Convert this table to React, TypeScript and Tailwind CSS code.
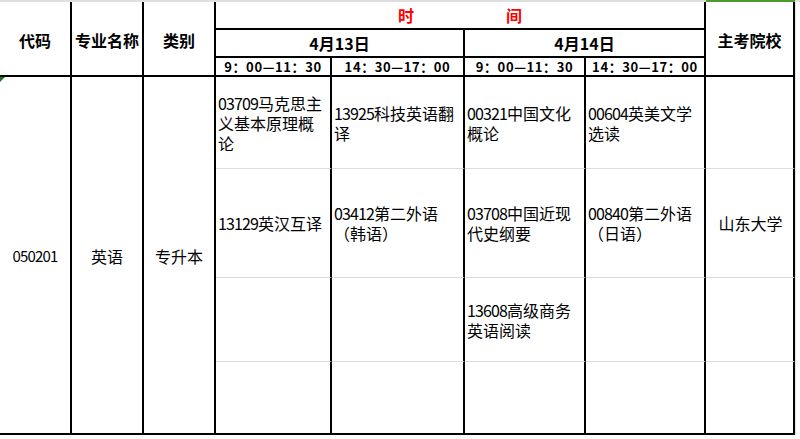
import React from "react";

const font = { fontFamily: '"Noto Sans CJK SC", "Noto Sans", sans-serif' };

function Line({ text }: { text: string }) {
  const m = text.match(/^(\d+)(.*)$/);
  if (!m) return <span>{text}</span>;
  return (
    <span>
      <span className="tracking-[-0.9px]">{m[1]}</span>
      {m[2]}
    </span>
  );
}

function Lines({ lines, extra = "" }: { lines: string[]; extra?: string }) {
  return (
    <div className={"flex flex-col whitespace-nowrap leading-[20px] text-[16px] " + extra}>
      {lines.map((l, i) => (
        <Line key={i} text={l} />
      ))}
    </div>
  );
}

export default function App() {
  const hdr = "flex items-center justify-center border-r-2 border-b-2 border-black font-bold text-[16px]";
  const time = "flex items-center justify-center border-r-2 border-b-2 border-black font-bold text-[13px] tracking-[0.6px] text-black";
  const cell = "flex items-center pl-[2px] border-r-2 border-r-black border-b border-b-[#dcdcdc] text-black";
  const cellLast = "flex items-center pl-[2px] border-r-2 border-b-2 border-black text-black";
  const merged = "relative flex items-center justify-center border-r-2 border-b-2 border-black text-black";

  return (
    <div className="w-[800px] h-[439px] bg-white overflow-hidden text-black" style={font}>
      <div className="grid grid-cols-[72px_72px_72px_116px_133px_121px_120px_89px_5px] grid-rows-[2px_28px_28px_19px_92px_109px_84px_73px]">
        {/* top strip */}
        <div className="col-start-1 col-span-7 row-start-1 bg-[#dedede]" />
        <div className="col-start-8 row-start-1 bg-[#4e9a30]" />
        <div className="col-start-9 row-start-1 bg-[#dedede]" />

        {/* header */}
        <div className={hdr + " text-black col-start-1 row-start-2 row-span-3 pt-[3px]"}>代码</div>
        <div className={hdr + " text-black col-start-2 row-start-2 row-span-3 pt-[3px]"}>专业名称</div>
        <div className={hdr + " text-black col-start-3 row-start-2 row-span-3 pt-[3px]"}>类别</div>
        <div className={hdr + " col-start-4 col-span-4 row-start-2 text-[#ff0000] gap-[92px]"}>
          <span>时</span>
          <span>间</span>
        </div>
        <div className={hdr + " text-black col-start-8 row-start-2 row-span-3 pt-[3px]"}>主考院校</div>
        <div className={hdr + " text-black col-start-4 col-span-2 row-start-3"}>4月13日</div>
        <div className={hdr + " text-black col-start-6 col-span-2 row-start-3"}>4月14日</div>
        <div className={time + " col-start-4 row-start-4"}>9：00—11：30</div>
        <div className={time + " col-start-5 row-start-4"}>14：30—17：00</div>
        <div className={time + " col-start-6 row-start-4"}>9：00—11：30</div>
        <div className={time + " col-start-7 row-start-4"}>14：30—17：00</div>

        {/* merged body cells */}
        <div className={merged + " col-start-1 row-start-5 row-span-4 text-[15px] pt-[2px]"}>
          <svg className="absolute left-0 top-0" width="5" height="5" viewBox="0 0 5 5">
            <polygon points="0,0 5,0 0,5" fill="#1f7a1f" />
          </svg>
          <span className="tracking-[-0.8px]">050201</span>
        </div>
        <div className={merged + " col-start-2 row-start-5 row-span-4 text-[16px] pt-[2px]"}>英语</div>
        <div className={merged + " col-start-3 row-start-5 row-span-4 text-[16px] pt-[2px]"}>专升本</div>

        {/* body row 1 */}
        <div className={cell + " col-start-4 row-start-5"}>
          <Lines lines={["03709马克思主", "义基本原理概", "论"]} />
        </div>
        <div className={cell + " col-start-5 row-start-5"}>
          <Lines lines={["13925科技英语翻", "译"]} />
        </div>
        <div className={cell + " col-start-6 row-start-5"}>
          <Lines lines={["00321中国文化", "概论"]} />
        </div>
        <div className={cell + " col-start-7 row-start-5"}>
          <Lines lines={["00604英美文学", "选读"]} />
        </div>
        <div className={cell + " col-start-8 row-start-5"} />

        {/* body row 2 */}
        <div className={cell + " col-start-4 row-start-6"}>
          <Lines lines={["13129英汉互译"]} />
        </div>
        <div className={cell + " col-start-5 row-start-6"}>
          <Lines lines={["03412第二外语", "（韩语）"]} />
        </div>
        <div className={cell + " col-start-6 row-start-6"}>
          <Lines lines={["03708中国近现", "代史纲要"]} />
        </div>
        <div className={cell + " col-start-7 row-start-6"}>
          <Lines lines={["00840第二外语", "（日语）"]} />
        </div>
        <div className={cell + " col-start-8 row-start-6 justify-center pl-0"}>
          <span className="text-[16px]">山东大学</span>
        </div>

        {/* body row 3 */}
        <div className={cell + " col-start-4 row-start-7"} />
        <div className={cell + " col-start-5 row-start-7"} />
        <div className={cell + " col-start-6 row-start-7"}>
          <Lines lines={["13608高级商务", "英语阅读"]} />
        </div>
        <div className={cell + " col-start-7 row-start-7"} />
        <div className={cell + " col-start-8 row-start-7"} />

        {/* body row 4 */}
        <div className={cellLast + " col-start-4 row-start-8"} />
        <div className={cellLast + " col-start-5 row-start-8"} />
        <div className={cellLast + " col-start-6 row-start-8"} />
        <div className={cellLast + " col-start-7 row-start-8"} />
        <div className={cellLast + " col-start-8 row-start-8"} />

        {/* right gutter gridlines */}
        <div className="col-start-9 row-start-2 row-span-7 border-l border-[#e4e4e4]" />
      </div>
    </div>
  );
}
